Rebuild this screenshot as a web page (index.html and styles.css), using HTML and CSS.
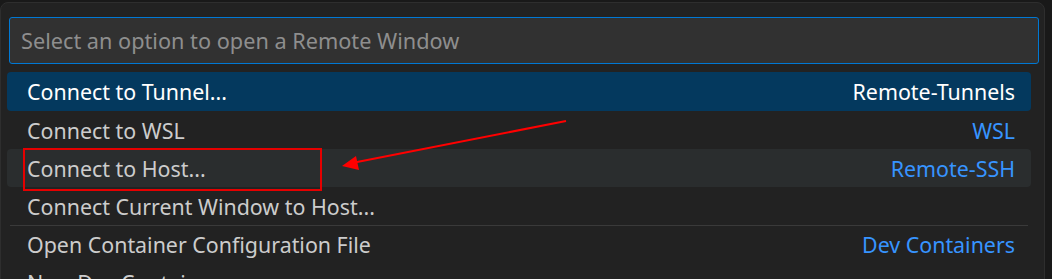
FILE: index.html
```html
<!DOCTYPE html>
<html lang="en">
<head>
  <meta charset="UTF-8" />
  <title>Remote Window</title>
  <link rel="stylesheet" href="styles.css">
</head>
<body>

  <div class="picker">
    <div class="picker-input">Select an option to open a Remote Window</div>

    <ul class="picker-list">
      <li class="item selected">
        <span class="label">Connect to Tunnel...</span>
        <span class="detail">Remote-Tunnels</span>
      </li>
      <li class="item">
        <span class="label">Connect to WSL</span>
        <span class="detail">WSL</span>
      </li>
      <li class="item hover">
        <span class="label">Connect to Host...</span>
        <span class="detail">Remote-SSH</span>
      </li>
      <li class="item">
        <span class="label">Connect Current Window to Host...</span>
      </li>
      <li class="item separator">
        <span class="label">Open Container Configuration File</span>
        <span class="detail">Dev Containers</span>
      </li>
      <li class="item">
        <span class="label">New Dev Container...</span>
      </li>
    </ul>
  </div>

  <!-- annotation on top of the screenshot -->
  <svg class="markup" width="1052" height="279" viewBox="0 0 1052 279">
    <rect x="24" y="149" width="297" height="41" fill="none" stroke="#e50000" stroke-width="2" />
    <line x1="566" y1="121" x2="352" y2="163" stroke="#ff0000" stroke-width="2" />
    <polygon points="342,166 356,156 359,170" fill="#ff0000" />
  </svg>

</body>
</html>
```

FILE: styles.css
```css
body {
  margin: 0;
  background: #191919;
  font-family: "Noto Sans", "Open Sans", sans-serif;
  overflow: hidden;
}

.picker {
  margin-top: 2px;
  width: 1045px;
  height: 300px;
  background: #222222;
  border: 1px solid #2e2e2e;
  border-radius: 8px 8px 0 0;
  padding: 14px 0 0 0;
  box-sizing: border-box;
}

.picker-input {
  margin: 0 0 8px 8px;
  width: 1030px;
  height: 47px;
  box-sizing: border-box;
  background: #313131;
  border: 1px solid #0078d4;
  border-radius: 3px;
  color: #8e8e8e;
  font-size: 21.7px;
  line-height: 45px;
  padding-left: 11px;
}

.picker-list {
  list-style: none;
  margin: 0;
  padding: 0 0 0 6px;
}

.item {
  width: 1024px;
  height: 38px;
  box-sizing: border-box;
  display: flex;
  justify-content: space-between;
  align-items: center;
  padding: 0 16px 0 20px;
  border-radius: 4px;
  color: #cccccc;
  font-size: 21.4px;
}

.item .detail {
  color: #3794ff;
}

.item.selected {
  height: 39px;
  background: #04395e;
  color: #ffffff;
}

.item.selected .detail {
  color: #ffffff;
}

.item.hover {
  background: #2a2d2e;
}

.item.separator {
  border-top: 1px solid #3a3a3a;
  border-radius: 0;
  margin-left: 3px;
  width: 1018px;
  padding-left: 17px;
  padding-right: 13px;
}

.markup {
  position: absolute;
  left: 0;
  top: 0;
}
```
